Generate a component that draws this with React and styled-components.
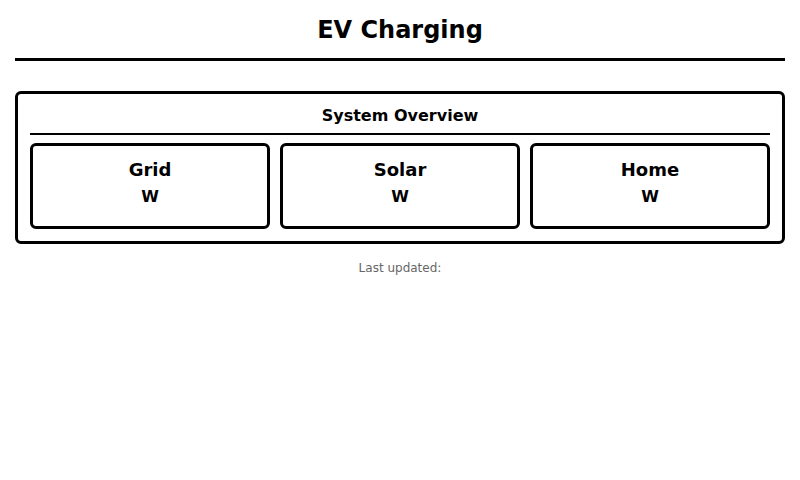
import React from "react";
import styled, { createGlobalStyle } from "styled-components";

const GlobalStyle = createGlobalStyle`
  * {
    box-sizing: border-box;
  }
  body {
    margin: 0;
    background: #fff;
    color: #000;
    font-family: "DejaVu Sans", Verdana, sans-serif;
  }
`;

const Page = styled.div`
  padding: 15px;
`;

const Header = styled.header`
  margin-bottom: 30px;
  padding-bottom: 13px;
  border-bottom: 3px solid #000;
  text-align: center;
`;

const Title = styled.h1`
  margin: 0;
  font-size: 24px;
  line-height: 30px;
  font-weight: 700;
`;

const Panel = styled.section`
  padding: 12px;
  border: 3px solid #000;
  border-radius: 6px;
`;

const PanelTitle = styled.h2`
  margin: 0 0 8px;
  padding-bottom: 7px;
  border-bottom: 2px solid #000;
  font-size: 16px;
  line-height: 20px;
  font-weight: 700;
  text-align: center;
`;

const Cards = styled.div`
  display: grid;
  grid-template-columns: repeat(3, 1fr);
  gap: 10px;
`;

const Card = styled.article`
  padding: 12px 12px 19px;
  border: 3px solid #000;
  border-radius: 6px;
  text-align: center;
`;

const CardName = styled.h3`
  margin: 0 0 5px;
  font-size: 18px;
  line-height: 24px;
  font-weight: 700;
`;

const Reading = styled.p`
  margin: 0;
  font-size: 16px;
  line-height: 20px;
  font-weight: 700;
`;

const Updated = styled.footer`
  margin-top: 16px;
  color: #666;
  font-size: 12px;
  line-height: 16px;
  text-align: center;
`;

const sources = ["Grid", "Solar", "Home"];

export default function App() {
  return (
    <>
      <GlobalStyle />
      <Page>
        <Header>
          <Title>EV Charging</Title>
        </Header>
        <main>
          <Panel>
            <PanelTitle>System Overview</PanelTitle>
            <Cards>
              {sources.map((name) => (
                <Card key={name}>
                  <CardName>{name}</CardName>
                  <Reading>W</Reading>
                </Card>
              ))}
            </Cards>
          </Panel>
        </main>
        <Updated>Last updated:</Updated>
      </Page>
    </>
  );
}
